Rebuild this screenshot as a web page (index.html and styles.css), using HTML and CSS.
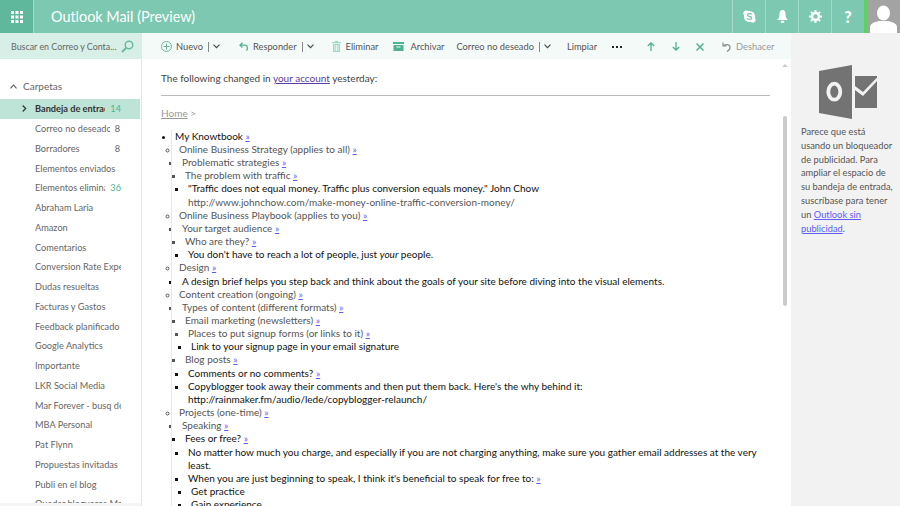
FILE: index.html
```html
<!DOCTYPE html>
<html lang="es">
<head>
<meta charset="utf-8">
<title>Outlook Mail</title>
<link rel="stylesheet" href="styles.css">
</head>
<body>
<header class="topbar">
  <div class="waffle"><svg width="12" height="12" viewBox="0 0 12 12" fill="#fff"><rect width="3" height="3"/><rect x="4.500" width="3" height="3"/><rect x="9" width="3" height="3"/><rect y="4.500" width="3" height="3"/><rect x="4.500" y="4.500" width="3" height="3"/><rect x="9" y="4.500" width="3" height="3"/><rect y="9" width="3" height="3"/><rect x="4.500" y="9" width="3" height="3"/><rect x="9" y="9" width="3" height="3"/></svg></div>
  <div class="brand">Outlook Mail (Preview)</div>
  <div class="topicon"><svg width="13" height="13" viewBox="0 0 13 13"><circle cx="6.500" cy="6.500" r="5.600" fill="#fff"/><circle cx="3.200" cy="3.200" r="2.800" fill="#fff"/><circle cx="9.800" cy="9.800" r="2.800" fill="#fff"/><path d="M9 4.400C8.200 3.400 4.500 3.200 4.400 5.100 4.400 7 8.800 6 8.800 8c0 1.800-3.800 1.600-4.800.4" fill="none" stroke="#7cc8b0" stroke-width="1.300"/></svg></div>
  <div class="topicon"><svg width="11" height="13" viewBox="0 0 11 13" fill="#fff"><path d="M5.500 0C7.500 0 8.500 1.500 8.500 4c0 2.500.6 4.500 2.500 6H0c1.900-1.500 2.500-3.500 2.500-6C2.500 1.500 3.500 0 5.500 0z"/><rect x="3.800" y="10.800" width="3.400" height="2"/></svg></div>
  <div class="topicon"><svg width="13" height="13" viewBox="0 0 13 13"><circle cx="6.500" cy="6.500" r="3.500" fill="none" stroke="#fff" stroke-width="2.400"/><path d="M6.500 0v13M0 6.500h13M1.900 1.900l9.200 9.200M11.100 1.900l-9.200 9.200" stroke="#fff" stroke-width="2" stroke-dasharray="2 9 2"/></svg></div>
  <div class="topicon help">?</div>
  <div class="avatar"><svg width="27" height="33" viewBox="0 0 27 33" fill="#fff"><ellipse cx="13.500" cy="13" rx="6.500" ry="7.500"/><path d="M0 33v-6c0-3 4-5 9-6h9c5 1 9 3 9 6v6z"/></svg></div>
</header>

<div class="layout">
  <aside class="sidebar">
    <div class="search"><span class="search-text">Buscar en Correo y Conta...</span>
      <svg width="13" height="13" viewBox="0 0 13 13" fill="none" stroke="#6dbb9f" stroke-width="1.500"><circle cx="8" cy="5" r="3.800"/><path d="M5.300 7.700L1 12" stroke-width="2"/></svg></div>
    <div class="folders-head"><svg width="7" height="5" viewBox="0 0 7 5" fill="none" stroke="#555" stroke-width="1.100"><path d="M.5 4.300L3.500 1l3 3.300"/></svg><span>Carpetas</span></div>
    <ul class="folders">
      <li class="folder active"><svg class="caret" width="5" height="7" viewBox="0 0 5 7" fill="none" stroke="#333" stroke-width="1.200"><path d="M.7.500l3 3-3 3"/></svg><span class="fname short">Bandeja de entrada</span><span class="count green">14</span></li>
      <li class="folder"><span class="fname">Correo no deseado</span><span class="count">8</span></li>
      <li class="folder"><span class="fname">Borradores</span><span class="count">8</span></li>
      <li class="folder"><span class="fname">Elementos enviados</span></li>
      <li class="folder"><span class="fname short">Elementos eliminados</span><span class="count green">36</span></li>
      <li class="folder"><span class="fname">Abraham Laria</span></li>
      <li class="folder"><span class="fname">Amazon</span></li>
      <li class="folder"><span class="fname">Comentarios</span></li>
      <li class="folder"><span class="fname">Conversion Rate Experts</span></li>
      <li class="folder"><span class="fname">Dudas resueltas</span></li>
      <li class="folder"><span class="fname">Facturas y Gastos</span></li>
      <li class="folder"><span class="fname">Feedback planificado</span></li>
      <li class="folder"><span class="fname">Google Analytics</span></li>
      <li class="folder"><span class="fname">Importante</span></li>
      <li class="folder"><span class="fname">LKR Social Media</span></li>
      <li class="folder"><span class="fname">Mar Forever - busq de</span></li>
      <li class="folder"><span class="fname">MBA Personal</span></li>
      <li class="folder"><span class="fname">Pat Flynn</span></li>
      <li class="folder"><span class="fname">Propuestas invitadas</span></li>
      <li class="folder"><span class="fname">Publi en el blog</span></li>
      <li class="folder"><span class="fname">Quedar blogueros Ma</span></li>
    </ul>
    <div class="side-strip"></div>
  </aside>

  <main class="content">
    <nav class="toolbar">
      <span class="tool first"><svg width="11" height="11" viewBox="0 0 11 11" fill="none" stroke="#6dbb9f"><circle cx="5.500" cy="5.500" r="5"/><path d="M5.500 2.500v6M2.500 5.500h6"/></svg>Nuevo</span>
      <span class="split"></span><svg class="chev" width="7" height="5" viewBox="0 0 7 5" fill="none" stroke="#444" stroke-width="1.100"><path d="M.5.700l3 3 3-3"/></svg>
      <span class="tool reply"><svg width="10" height="10" viewBox="0 0 10 10" fill="none" stroke="#4db391" stroke-width="1.300"><path d="M3.500.8L1 3.200l2.500 2.400M1 3.200h5c2.500 0 3.200 3 1.500 5.500"/></svg>Responder</span>
      <span class="split"></span><svg class="chev" width="7" height="5" viewBox="0 0 7 5" fill="none" stroke="#444" stroke-width="1.100"><path d="M.5.700l3 3 3-3"/></svg>
      <span class="tool del"><svg width="9" height="11" viewBox="0 0 9 11" fill="#9fd8c4"><rect y="1" width="9" height="1.200"/><rect x="3" width="3" height="1"/><path d="M1 3h7v8H1zM2.500 4v6h.8V4zM4.100 4v6h.8V4zM5.700 4v6h.8V4z" fill-rule="evenodd"/></svg>Eliminar</span>
      <span class="tool arch"><svg width="11" height="9" viewBox="0 0 11 9" fill="#4db391"><rect width="11" height="2"/><path d="M.5 3h10v6H.5zM3.500 4.500v1h4v-1z" fill-rule="evenodd"/></svg>Archivar</span>
      <span class="tool junk">Correo no deseado</span>
      <span class="split"></span><svg class="chev" width="7" height="5" viewBox="0 0 7 5" fill="none" stroke="#444" stroke-width="1.100"><path d="M.5.700l3 3 3-3"/></svg>
      <span class="tool clean">Limpiar</span>
      <span class="dots"><i></i><i></i><i></i></span>
      <svg class="arrow up" width="8" height="9" viewBox="0 0 8 9" fill="none" stroke="#4db391" stroke-width="1.300"><path d="M4 9V1M.8 4L4 1l3.200 3"/></svg>
      <svg class="arrow down" width="8" height="9" viewBox="0 0 8 9" fill="none" stroke="#4db391" stroke-width="1.300"><path d="M4 0v8M.8 5L4 8l3.200-3"/></svg>
      <svg class="arrow close" width="8" height="8" viewBox="0 0 8 8" fill="none" stroke="#4db391" stroke-width="1.500"><path d="M.5.500l7 7M7.500.500l-7 7"/></svg>
      <span class="tool undo"><svg width="9" height="10" viewBox="0 0 9 10" fill="none" stroke="#8c8c8c" stroke-width="1.200"><path d="M1 .5V4h3.500M1 4c2-2 6.500-2 7 1 .3 2-1 3.500-3 4.500"/></svg>Deshacer</span>
    </nav>

    <div class="reader">
      <p class="intro">The following changed in <a class="visited" href="#">your account</a> yesterday:</p>
      <hr class="rule">
      <p class="crumb"><a class="home" href="#">Home</a> &gt;</p>
      <div class="tree">
      <ul class="l0">
        <li class="bk">My Knowtbook <a href="#">»</a>
        <ul class="l1">
          <li>Online Business Strategy (applies to all) <a href="#">»</a>
          <ul class="l2">
            <li>Problematic strategies <a href="#">»</a>
            <ul class="l3">
              <li>The problem with traffic <a href="#">»</a>
              <ul class="l3">
                <li class="bk">"Traffic does not equal money. Traffic plus conversion equals money." John Chow<br><span class="gr">http://www.johnchow.com/make-money-online-traffic-conversion-money/</span></li>
              </ul></li>
            </ul></li>
          </ul></li>
          <li>Online Business Playbook (applies to you) <a href="#">»</a>
          <ul class="l2">
            <li>Your target audience <a href="#">»</a>
            <ul class="l3">
              <li>Who are they? <a href="#">»</a>
              <ul class="l3">
                <li class="bk">You don't have to reach a lot of people, just <em>your</em> people.</li>
              </ul></li>
            </ul></li>
          </ul></li>
          <li>Design <a href="#">»</a>
          <ul class="l2">
            <li class="bk">A design brief helps you step back and think about the goals of your site before diving into the visual elements.</li>
          </ul></li>
          <li>Content creation (ongoing) <a href="#">»</a>
          <ul class="l2">
            <li>Types of content (different formats) <a href="#">»</a>
            <ul class="l3">
              <li>Email marketing (newsletters) <a href="#">»</a>
              <ul class="l3">
                <li>Places to put signup forms (or links to it) <a href="#">»</a>
                <ul class="l3">
                  <li class="bk">Link to your signup page in your email signature</li>
                </ul></li>
              </ul></li>
              <li>Blog posts <a href="#">»</a>
              <ul class="l3">
                <li class="bk">Comments or no comments? <a href="#">»</a></li>
                <li class="bk">Copyblogger took away their comments and then put them back. Here's the why behind it:<br>http://rainmaker.fm/audio/lede/copyblogger-relaunch/</li>
              </ul></li>
            </ul></li>
          </ul></li>
          <li>Projects (one-time) <a href="#">»</a>
          <ul class="l2">
            <li>Speaking <a href="#">»</a>
            <ul class="l3">
              <li class="bk">Fees or free? <a href="#">»</a>
              <ul class="l3">
                <li class="bk">No matter how much you charge, and especially if you are not charging anything, make sure you gather email addresses at the very least.</li>
                <li class="bk">When you are just beginning to speak, I think it's beneficial to speak for free to: <a href="#">»</a>
                <ul class="l3">
                  <li class="bk">Get practice</li>
                  <li class="bk">Gain experience</li>
                </ul></li>
              </ul></li>
            </ul></li>
          </ul></li>
        </ul></li>
      </ul>
      </div>
      <div class="scroll-up"></div>
      <div class="scroll-thumb"></div>
    </div>
  </main>

  <aside class="adpane">
    <svg class="adlogo" width="59" height="54" viewBox="0 0 59 54"><path d="M0 6L33 0v54L0 48z" fill="#737373"/><path d="M36 11h22v1.500L44 27l-8-6z" fill="#737373"/><path d="M36 25l8 6 14-15v27H36z" fill="#737373"/><ellipse cx="15.300" cy="26.700" rx="6" ry="8" fill="none" stroke="#f2f2f2" stroke-width="3.800"/></svg>
    <p class="adtext">Parece que está usando un bloqueador de publicidad. Para ampliar el espacio de su bandeja de entrada, suscríbase para tener un <a href="#">Outlook sin publicidad</a>.</p>
  </aside>
</div>
</body>
</html>
```

FILE: styles.css
```css
* { box-sizing: border-box; }
html, body { margin: 0; height: 506px; overflow: hidden; }
body { font-family: Lato, "Open Sans", sans-serif; color: #333; background: #fff; font-size: 10px; }
ul { margin: 0; padding: 0; }
p { margin: 0; }

.topbar { display: flex; height: 33px; background: #7cc8b0; color: #fff; }
.waffle { width: 34px; background: #5fb89c; border-right: 1px solid #a5dac9; display: flex; align-items: center; justify-content: center; }
.brand { flex: 1; padding-left: 17px; font-size: 14.400px; line-height: 33px; }
.topicon { width: 33px; border-left: 1px solid #a5dac9; display: flex; align-items: center; justify-content: center; }
.help { font-weight: 900; font-size: 16px; }
.avatar { width: 36px; background: #a3a3a3; border-left: 3px solid #5ed25e; display: flex; align-items: flex-end; justify-content: center; }

.layout { display: flex; height: 473px; }

.sidebar { width: 142px; border-right: 1px solid #e6e6e6; position: relative; overflow: hidden; font-size: 9.200px; }
.search { height: 26px; background: #d8efe7; display: flex; align-items: center; justify-content: space-between; padding: 0 7px 0 11px; color: #666; white-space: nowrap; font-size: 8.900px; }
.folders-head { height: 38px; padding: 16px 0 0 10px; display: flex; align-items: center; gap: 6px; font-size: 10px; color: #666; }
.folders { list-style: none; margin-top: 2px; width: 140px; }
.folder { height: 19.750px; display: flex; align-items: center; padding-left: 35px; color: #666; position: relative; white-space: nowrap; }
.active { background: #bde4d7; color: #333; font-weight: 700; }
.caret { position: absolute; left: 22px; top: 6px; }
.fname { width: 75px; overflow: hidden; }
.folder .short { width: 70px; }
.folder .fname:only-child { width: 86px; }
.count { margin-left: auto; margin-right: 20px; }
.green { color: #4db391; font-weight: 400; margin-right: 19px; }
.side-strip { position: absolute; left: 0; right: 0; bottom: 0; height: 3px; background: #f5f5f5; }

.content { flex: 1; min-width: 0; display: flex; flex-direction: column; }
.toolbar { height: 26px; background: #f4faf8; display: flex; align-items: center; padding: 1px 0 0 19px; color: #555; white-space: nowrap; font-size: 9.300px; }
.tool { display: inline-flex; align-items: center; gap: 4px; }
.split { width: 1px; height: 10px; background: #888; margin: 0 4px 0 5px; }
.reply { margin-left: 19px; gap: 4px; }
.del { margin-left: 18px; gap: 5px; }
.arch { margin-left: 15px; gap: 6px; }
.junk { margin-left: 12px; }
.clean { margin-left: 16px; }
.dots { margin-left: 15px; display: inline-flex; gap: 2px; }
.dots i { width: 2px; height: 2px; background: #222; display: block; }
.up { margin-left: 25px; }
.down { margin-left: 17px; }
.close { margin-left: 16px; }
.undo { margin-left: 18px; color: #999; gap: 5px; }

.reader { flex: 1; position: relative; overflow: hidden; padding: 13px 0 0 19px; line-height: 13.160px; color: #555; }
.intro { color: #444; }
.rule { margin: 10px 21px 0 0; border: 0; border-top: 1px solid #bbb; }
.crumb { margin-top: 11px; color: #999; }
.home { color: #999; }
.visited { color: #5a3e9e; }
.tree { margin-top: 9.500px; width: 610px; position: relative; }
.tree::before { content: ""; position: absolute; left: 10px; top: 0; bottom: -30px; border-left: 1px solid #e8e8e8; }
.tree a { color: #5c5cff; }
.l0 { padding-left: 14px; list-style: disc; }
.l1 { padding-left: 4px; list-style: circle; }
.l2 { padding-left: 3px; list-style: square; }
.l3 { padding-left: 3px; list-style: square; }
.bk { color: #111; }
.l1 > li { color: #555; }
.l2 > li:not(.bk), .l3 > li:not(.bk) { color: #555; }
.gr { color: #555; }
.scroll-up { position: absolute; right: 3px; top: 5px; border: 3px solid transparent; border-top: 0; border-bottom: 3px solid #ccc; }
.scroll-thumb { position: absolute; right: 4px; top: 57px; width: 4px; height: 190px; background: #ccc; border-radius: 2px; }

.adpane { width: 109px; background: #f2f2f2; padding: 32px 5px 0 10px; line-height: 13.800px; color: #555; font-size: 9.300px; }
.adlogo { display: block; margin: 0 0 0 18px; }
.adtext { margin-top: 6px; }
.adtext a { color: #5c5cff; }
```
